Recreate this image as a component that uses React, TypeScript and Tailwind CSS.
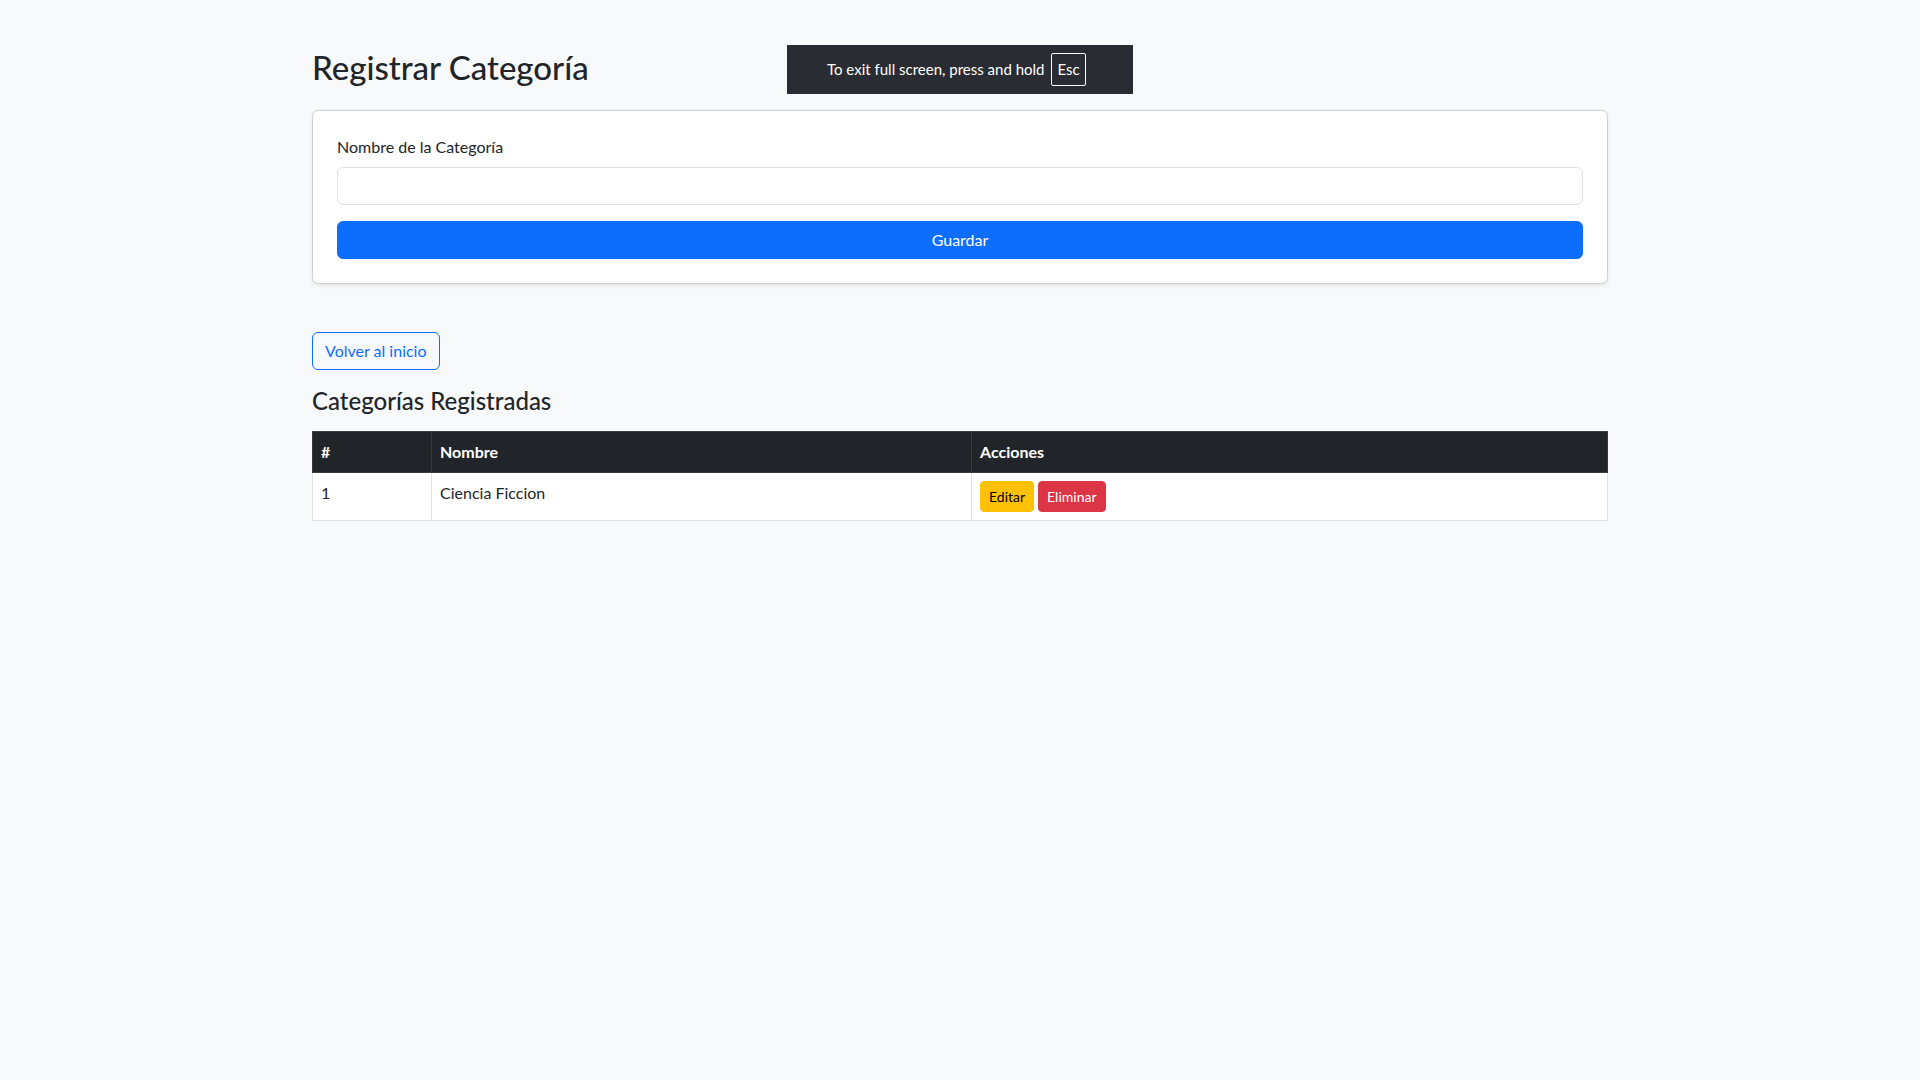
import React from "react";

const font = { fontFamily: '"Segoe UI", Lato, "Noto Sans", sans-serif' };

type Categoria = { id: number; nombre: string };

const categorias: Categoria[] = [{ id: 1, nombre: "Ciencia Ficcion" }];

const FullscreenNotice: React.FC = () => (
  <div className="fixed left-[787px] top-[45px] z-50 flex h-[49px] w-[346px] items-center gap-[7px] bg-[#292c33] pl-[40px] text-[15px] text-white">
    <span>To exit full screen, press and hold</span>
    <span className="flex h-[33px] items-center rounded-[2px] border border-white px-[5px]">Esc</span>
  </div>
);

export default function App() {
  const [nombre, setNombre] = React.useState("");

  return (
    <div className="min-h-[1080px] bg-[#f8f9fa] text-[16px] leading-[1.5] text-[#212529]" style={font}>
      <FullscreenNotice />
      <div className="mx-auto w-[1320px] px-[12px] pt-[48px]">
        <h2 className="mb-[24px] text-[33px] font-medium leading-[38px]">Registrar Categoría</h2>

        <div className="rounded-[6px] border border-black/[0.175] bg-white shadow-[0_2px_4px_rgba(0,0,0,0.075)]">
          <form className="p-[24px]" onSubmit={(e) => e.preventDefault()}>
            <label className="mb-[8px] block text-[16px] leading-[24px]">Nombre de la Categoría</label>
            <input
              value={nombre}
              onChange={(e) => setNombre(e.target.value)}
              className="mb-[16px] block h-[38px] w-full rounded-[6px] border border-[#dee2e6] bg-white px-[12px] outline-none"
            />
            <button
              type="submit"
              className="block h-[38px] w-full rounded-[6px] border border-[#0d6efd] bg-[#0d6efd] text-white"
            >
              Guardar
            </button>
          </form>
        </div>

        <div className="mt-[48px]">
          <a
            href="#"
            className="inline-flex h-[38px] items-center rounded-[6px] border border-[#0d6efd] px-[12px] text-[#0d6efd]"
          >
            Volver al inicio
          </a>
        </div>

        <h4 className="mt-[16px] mb-[16px] text-[24px] font-medium leading-[29px]">Categorías Registradas</h4>

        <table className="w-full border-collapse border border-[#dee2e6]">
          <thead>
            <tr className="bg-[#212529] text-white">
              <th className="h-[41px] w-[119px] border border-[#373b3e] px-[8px] text-left font-bold">#</th>
              <th className="w-[540px] border border-[#373b3e] px-[8px] text-left font-bold">Nombre</th>
              <th className="border border-[#373b3e] px-[8px] text-left font-bold">Acciones</th>
            </tr>
          </thead>
          <tbody>
            {categorias.map((c) => (
              <tr key={c.id} className="bg-white">
                <td className="h-[48px] border border-[#dee2e6] px-[8px] pb-[8px] align-middle">{c.id}</td>
                <td className="border border-[#dee2e6] px-[8px] pb-[8px]">{c.nombre}</td>
                <td className="border border-[#dee2e6] px-[8px]">
                  <div className="flex gap-[4px]">
                    <button className="h-[31px] rounded-[4px] border border-[#ffc107] bg-[#ffc107] px-[8px] text-[14px] text-black">
                      Editar
                    </button>
                    <button className="h-[31px] rounded-[4px] border border-[#dc3545] bg-[#dc3545] px-[8px] text-[14px] text-white">
                      Eliminar
                    </button>
                  </div>
                </td>
              </tr>
            ))}
          </tbody>
        </table>
      </div>
    </div>
  );
}
